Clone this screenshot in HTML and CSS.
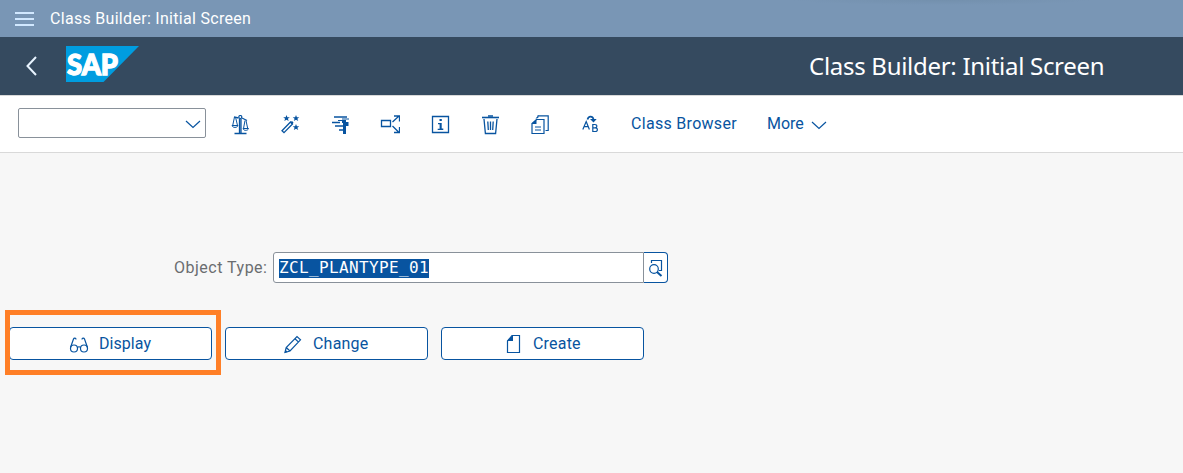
FILE: index.html
```html
<!DOCTYPE html>
<html lang="en">
<head>
<meta charset="utf-8">
<title>Class Builder: Initial Screen</title>
<link rel="stylesheet" href="styles.css">
</head>
<body>
<div class="topbar">
  <svg class="menu" width="20" height="14" viewBox="0 0 20 14"><path d="M0 1h19M0 7h19M0 13h19" stroke="#d1e8ff" stroke-width="2"/></svg>
  <span class="topbar-title">Class Builder: Initial Screen</span>
</div>
<header class="shell">
  <svg class="back" width="14" height="20" viewBox="0 0 14 20"><path d="M12 1L3.500 10l8.500 9" fill="none" stroke="#e8f4ff" stroke-width="2"/></svg>
  <svg class="logo" width="74" height="36" viewBox="0 0 74 36"><path d="M0 0h73L37.500 36H0z" fill="#009de0"/><text class="logo-text" x="1" y="28.500" textLength="51" lengthAdjust="spacingAndGlyphs">SAP</text></svg>
  <h1 class="title">Class Builder: Initial Screen</h1>
</header>
<div class="toolbar">
  <div class="select"><svg width="16" height="9" viewBox="0 0 16 9"><path d="M1 1l7 6.500L15 1" class="s"/></svg></div>
  <div class="icons">
    <button class="tool" aria-label="Compare"><svg viewBox="0 0 20 20"><path d="M9.500 3.500v15M11 3.500v15" class="s mid"/><path d="M4.500 18.500h12M4 1.800L8.500 3M12 3l5 2.500" class="s mid"/><circle cx="10.300" cy="2" r="1.500" class="s"/><path d="M4.500 2L2.700 10.500M5.500 2l2 8.500M15 5.500l-1.500 8M16 5.500l1.700 8" class="s thin"/><path d="M2 10.500h6c-.5 2.500-5.500 2.500-6 0zM13 13.500h5.500c-.5 2.500-5 2.500-5.500 0z" class="s thin"/></svg></button>
    <button class="tool" aria-label="Pattern"><svg viewBox="0 0 20 20"><path d="M2 15.700L10.500 7l2 2L4 17.700z" class="s mid"/><path d="M10 7.500l2-1.500L13.500 7.500 12 9.500z" class="f"/><path d="M6.500 0l.9 2.300H9.800L7.900 3.800 8.700 6 6.500 4.700 4.300 6l.8-2.200L3.200 2.300h2.400zM16 0l.9 2.300h2.400l-1.900 1.500.8 2.200-2.200-1.300L13.800 6l.8-2.200-1.900-1.500h2.400zM16 9l.9 2.300h2.400l-1.900 1.500.8 2.200-2.200-1.300-2.200 1.300.8-2.200-1.900-1.500h2.400z" class="f"/></svg></button>
    <button class="tool" aria-label="Pretty printer"><svg viewBox="0 0 20 20"><path d="M4 2h13M2 7.500h8M5 11h8M9 15h5" stroke="#0854a0" stroke-width="1.600"/><path d="M12 4h7M8 5.500h4" class="s thin"/><path d="M12 5h4v14h-3V8h-1zM16 7h2.500v4H16z" class="f"/></svg></button>
    <button class="tool" aria-label="Where used"><svg viewBox="0 0 20 20"><path d="M1.500 5.500h9v6h-9z" class="s mid"/><path d="M12.500 7l6.500-6M14 1h5.500v5.500M12.500 11l6.500 6.500M14 17.500h5.500V12" class="s mid"/></svg></button>
    <button class="tool" aria-label="Information"><svg viewBox="0 0 20 20"><path d="M2.500 1.500h16v16h-16z" class="s mid"/><path d="M9.500 4h2.300v2H9.500zM8 8h3.700v5.500h1.600V15H7.700v-1.300h1.900V9.300H8z" class="f"/></svg></button>
    <button class="tool" aria-label="Delete"><svg viewBox="0 0 20 20"><path d="M2 2.500h17" stroke="#0854a0" stroke-width="1.600"/><path d="M8 1h5M4 4l1.400 14.500h10.200L17 4M7.800 6.500l.5 8.500M10.500 6.500V15M13.200 6.500l-.5 8.500" class="s mid"/></svg></button>
    <button class="tool" aria-label="Copy"><svg viewBox="0 0 20 20"><path d="M6.500 4.500h7.500v14h-12v-10z" class="s"/><path d="M1.500 9l5-5v5zM5.500 3.500L8.500 .3V2.500L7 3.500z" class="f"/><path d="M7.500 .8h10.700v14.700H15.500M5 12h6M5 15h6" class="s"/></svg></button>
    <button class="tool" aria-label="Rename"><svg viewBox="0 0 20 20"><path d="M2.800 14.500l3.400-8 3.200 8M4 11.700h4.500" class="s"/><path d="M12.800 9.500v7h2.400c2.900 0 2.900-3.700 0-3.700h-2.400 2.100c2.600 0 2.600-3.300 0-3.300z" class="s"/><path d="M7.500 4.500C8.500 .8 12.500 .8 13.500 4" fill="none" stroke="#0854a0" stroke-width="1.700"/><path d="M10 4h6.700L13.500 7.500z" class="f"/></svg></button>
  </div>
  <span class="browser">Class Browser</span>
  <span class="more">More</span>
  <svg class="more-arrow" width="16" height="9" viewBox="0 0 16 9"><path d="M1 1l7 6.500L15 1" class="s"/></svg>
</div>
<main class="content">
  <div class="row">
    <label class="label">Object Type:</label>
    <div class="field"><span class="selected">ZCL_PLANTYPE_01</span></div>
    <button class="help" aria-label="Value help"><svg width="16" height="20" viewBox="0 0 16 20"><path d="M3.500 4V1.500H13.500v10H11" class="s"/><circle cx="6" cy="10" r="4.300" class="s"/><path d="M9 13l4.500 4" stroke="#0854a0" stroke-width="2"/></svg></button>
  </div>
  <div class="actions">
    <div class="action-wrap">
    <button class="action display"><svg width="20" height="16" viewBox="0 0 20 16"><circle cx="5" cy="11.500" r="3.500" class="s"/><circle cx="15" cy="11.500" r="3.500" class="s"/><path d="M8.500 10.500c.5-1 2.500-1 3 0M1.500 10.500L4.500 2c.5-1.200 2.500-1.200 2.500.5M18.500 10.500L15.500 2c-.5-1.200-2.500-1.200-2.500.5" class="s"/></svg><span>Display</span></button>
    <div class="highlight"></div>
    </div>
    <button class="action change"><svg width="20" height="20" viewBox="0 0 20 20"><path d="M2 18.500l1.200-5L14 2.500l3.500 3.300L7 17zM12 4.700l3.300 3.200M3.200 13.500L7 17" class="s"/><path d="M1.700 18.800l.8-3L4.800 18z" class="f"/></svg><span>Change</span></button>
    <button class="action create"><svg width="16" height="20" viewBox="0 0 16 20"><path d="M6 1.500h7.500v17h-12V7z" class="s"/><path d="M1 7l6-6v6z" class="f"/></svg><span>Create</span></button>
  </div>
</main>
</body>
</html>
```
FILE: styles.css
```css
* { box-sizing: border-box; }
body {
  margin: 0;
  height: 473px;
  overflow: hidden;
  background: #f7f7f7;
  color: #0854a0;
  font: 16px/20px Roboto, Arial, sans-serif;
}
svg { display: block; flex: none; }
button { font: inherit; color: inherit; padding: 0; margin: 0; }
.s { fill: none; stroke: #0854a0; stroke-width: 1.2; }
.mid { stroke-width: 1.3; }
.thin { stroke-width: 1; }
.f { fill: #0854a0; }

.topbar {
  height: 37px;
  display: flex;
  align-items: center;
  padding-left: 15px;
  background: radial-gradient(ellipse 150px 5px at 943px 0, #7390ad, #7996b5);
  color: #fff;
}
.topbar-title { margin-left: 15px; letter-spacing: .3px; }

.shell {
  height: 59px;
  display: flex;
  align-items: center;
  padding: 0 0 4px 24px;
  background: #354a5f;
  border-bottom: 1px solid #d9d9d9;
  color: #fff;
}
.back { margin-top: 3px; }
.logo { margin-left: 28px; }
.logo-text { font: 900 29px Lato, sans-serif; fill: #fff; stroke: #fff; stroke-width: 1.3; }
.title { margin: 3px 0 0 669px; font: 400 24px/30px "Noto Sans", sans-serif; letter-spacing: -.29px; white-space: nowrap; }

.toolbar {
  height: 57px;
  display: flex;
  align-items: center;
  padding-left: 18px;
  background: #fff;
  border-bottom: 1px solid #d9d9d9;
}
.select {
  width: 188px;
  height: 30px;
  margin-bottom: 2px;
  border: 1px solid #89919a;
  border-radius: 2px;
  display: flex;
  align-items: center;
  justify-content: flex-end;
  padding: 3px 4px 0 0;
}
.icons { display: flex; margin: 2px 0 0 9px; }
.tool {
  width: 50px;
  height: 30px;
  border: 0;
  background: none;
  display: flex;
  align-items: center;
  justify-content: center;
}
.tool svg { width: 20px; height: 20px; }
.browser { margin: 0 0 1px 16px; white-space: nowrap; width: 106px; letter-spacing: .3px; }
.more { width: 37px; margin: 0 0 1px 30px; }
.more-arrow { margin: 3px 0 0 7px; }

.content { padding-top: 99px; }
.row { display: flex; height: 31px; padding-left: 174px; }
.label { width: 99px; color: #6a6d70; line-height: 31px; letter-spacing: .5px; white-space: nowrap; }
.field {
  width: 371px;
  border: 1px solid #89919a;
  border-radius: 3px 0 0 3px;
  background: #fff;
  padding: 5px 0 0 5px;
}
.selected {
  display: inline-block;
  height: 19px;
  width: 150px;
  background: #0854a0;
  color: #fff;
  font: 16px/18px "DejaVu Sans Mono", monospace;
  letter-spacing: .37px;
}
.help {
  width: 24px;
  border: 1px solid #0854a0;
  border-left: 0;
  border-radius: 0 4px 4px 0;
  background: #fff;
  display: flex;
  align-items: center;
  justify-content: center;
  padding: 3px 0 0;
}
.actions { display: flex; gap: 13px; margin-top: 44px; padding-left: 9px; }
.action-wrap { position: relative; width: 203px; }
.action {
  width: 203px;
  height: 33px;
  border: 1px solid #0854a0;
  border-radius: 4px;
  background: #fff;
  display: flex;
  align-items: center;
  text-align: left;
  letter-spacing: .2px;
}
.highlight {
  position: absolute;
  left: -4px;
  top: -17px;
  width: 216px;
  height: 65px;
  border: 5px solid #ff7f27;
}
.action svg { margin-top: 2px; }
.action.change svg, .action.create svg { margin-top: 0; }
.display { padding-left: 59px; }
.display span { margin-left: 10px; letter-spacing: .05px; }
.change { padding-left: 57px; }
.change span { margin-left: 10px; }
.create { padding-left: 64px; }
.create span { margin-left: 11px; }
```
